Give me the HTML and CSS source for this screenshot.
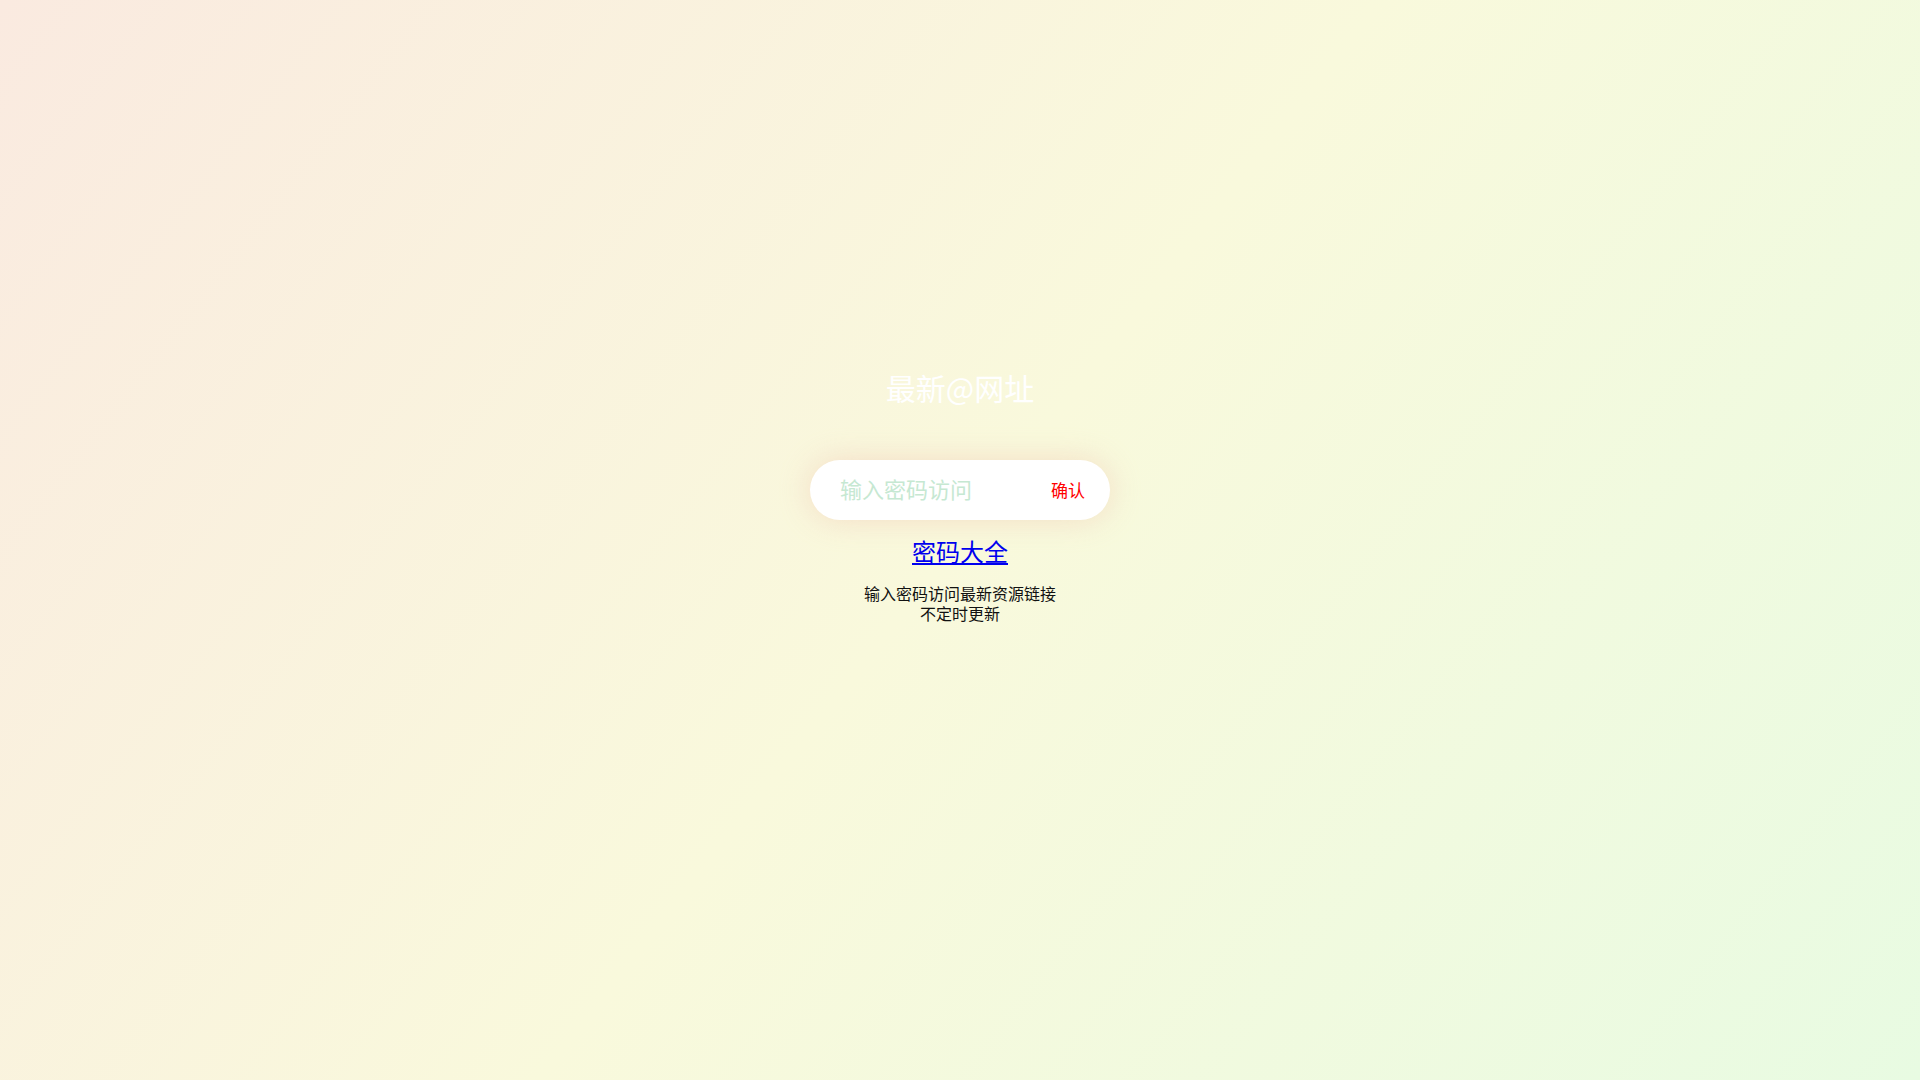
FILE: index.html
```html
<!DOCTYPE html>
<html lang="zh-CN">
<head>
<meta charset="utf-8">
<title>最新@网址</title>
<link rel="stylesheet" href="styles.css">
</head>
<body>
<main class="page">
  <h1 class="title">最新@网址</h1>
  <form class="search" onsubmit="return false;">
    <input class="search-input" type="password" placeholder="输入密码访问">
    <button class="search-btn" type="submit">确认</button>
  </form>
  <a class="link" href="#">密码大全</a>
  <div class="desc">
    <p class="desc-line">输入密码访问最新资源链接</p>
    <p class="desc-line">不定时更新</p>
  </div>
</main>
</body>
</html>
```
FILE: styles.css
```css
html, body {
  margin: 0;
  padding: 0;
  height: 100%;
}
body {
  font-family: "Noto Sans CJK SC", "Noto Sans", sans-serif;
  background: linear-gradient(128deg, #faeae0 0%, #f9f9dc 50%, #e8fbe2 100%);
  background-attachment: fixed;
  min-height: 100vh;
}
.page {
  display: flex;
  flex-direction: column;
  align-items: center;
  padding-top: 367px;
}
.title {
  margin: 0;
  font-size: 30px;
  line-height: 40px;
  font-weight: 400;
  color: #ffffff;
}
.search {
  margin-top: 53px;
  width: 300px;
  height: 60px;
  box-sizing: border-box;
  background: #ffffff;
  border-radius: 30px;
  box-shadow: 0 0 30px rgba(240, 190, 170, 0.45);
  display: flex;
  align-items: center;
  padding: 0 25px 0 30px;
}
.search-input {
  flex: 1;
  min-width: 0;
  border: none;
  outline: none;
  background: transparent;
  font-family: inherit;
  font-size: 22px;
  line-height: 30px;
  color: #333;
  padding: 0 0 4px;
}
.search-input::placeholder {
  color: #c6e8d2;
}
.search-btn {
  border: none;
  background: transparent;
  padding: 0 0 2px;
  font-family: inherit;
  font-size: 17px;
  color: #ff0000;
  cursor: pointer;
}
.link {
  margin-top: 16px;
  font-size: 24px;
  line-height: 30px;
  color: #0000ee;
  text-decoration: underline;
}
.desc {
  margin-top: 17px;
  display: flex;
  flex-direction: column;
  align-items: center;
}
.desc-line {
  margin: 0;
  font-size: 16px;
  line-height: 20px;
  height: 20px;
  color: #111;
}
```
